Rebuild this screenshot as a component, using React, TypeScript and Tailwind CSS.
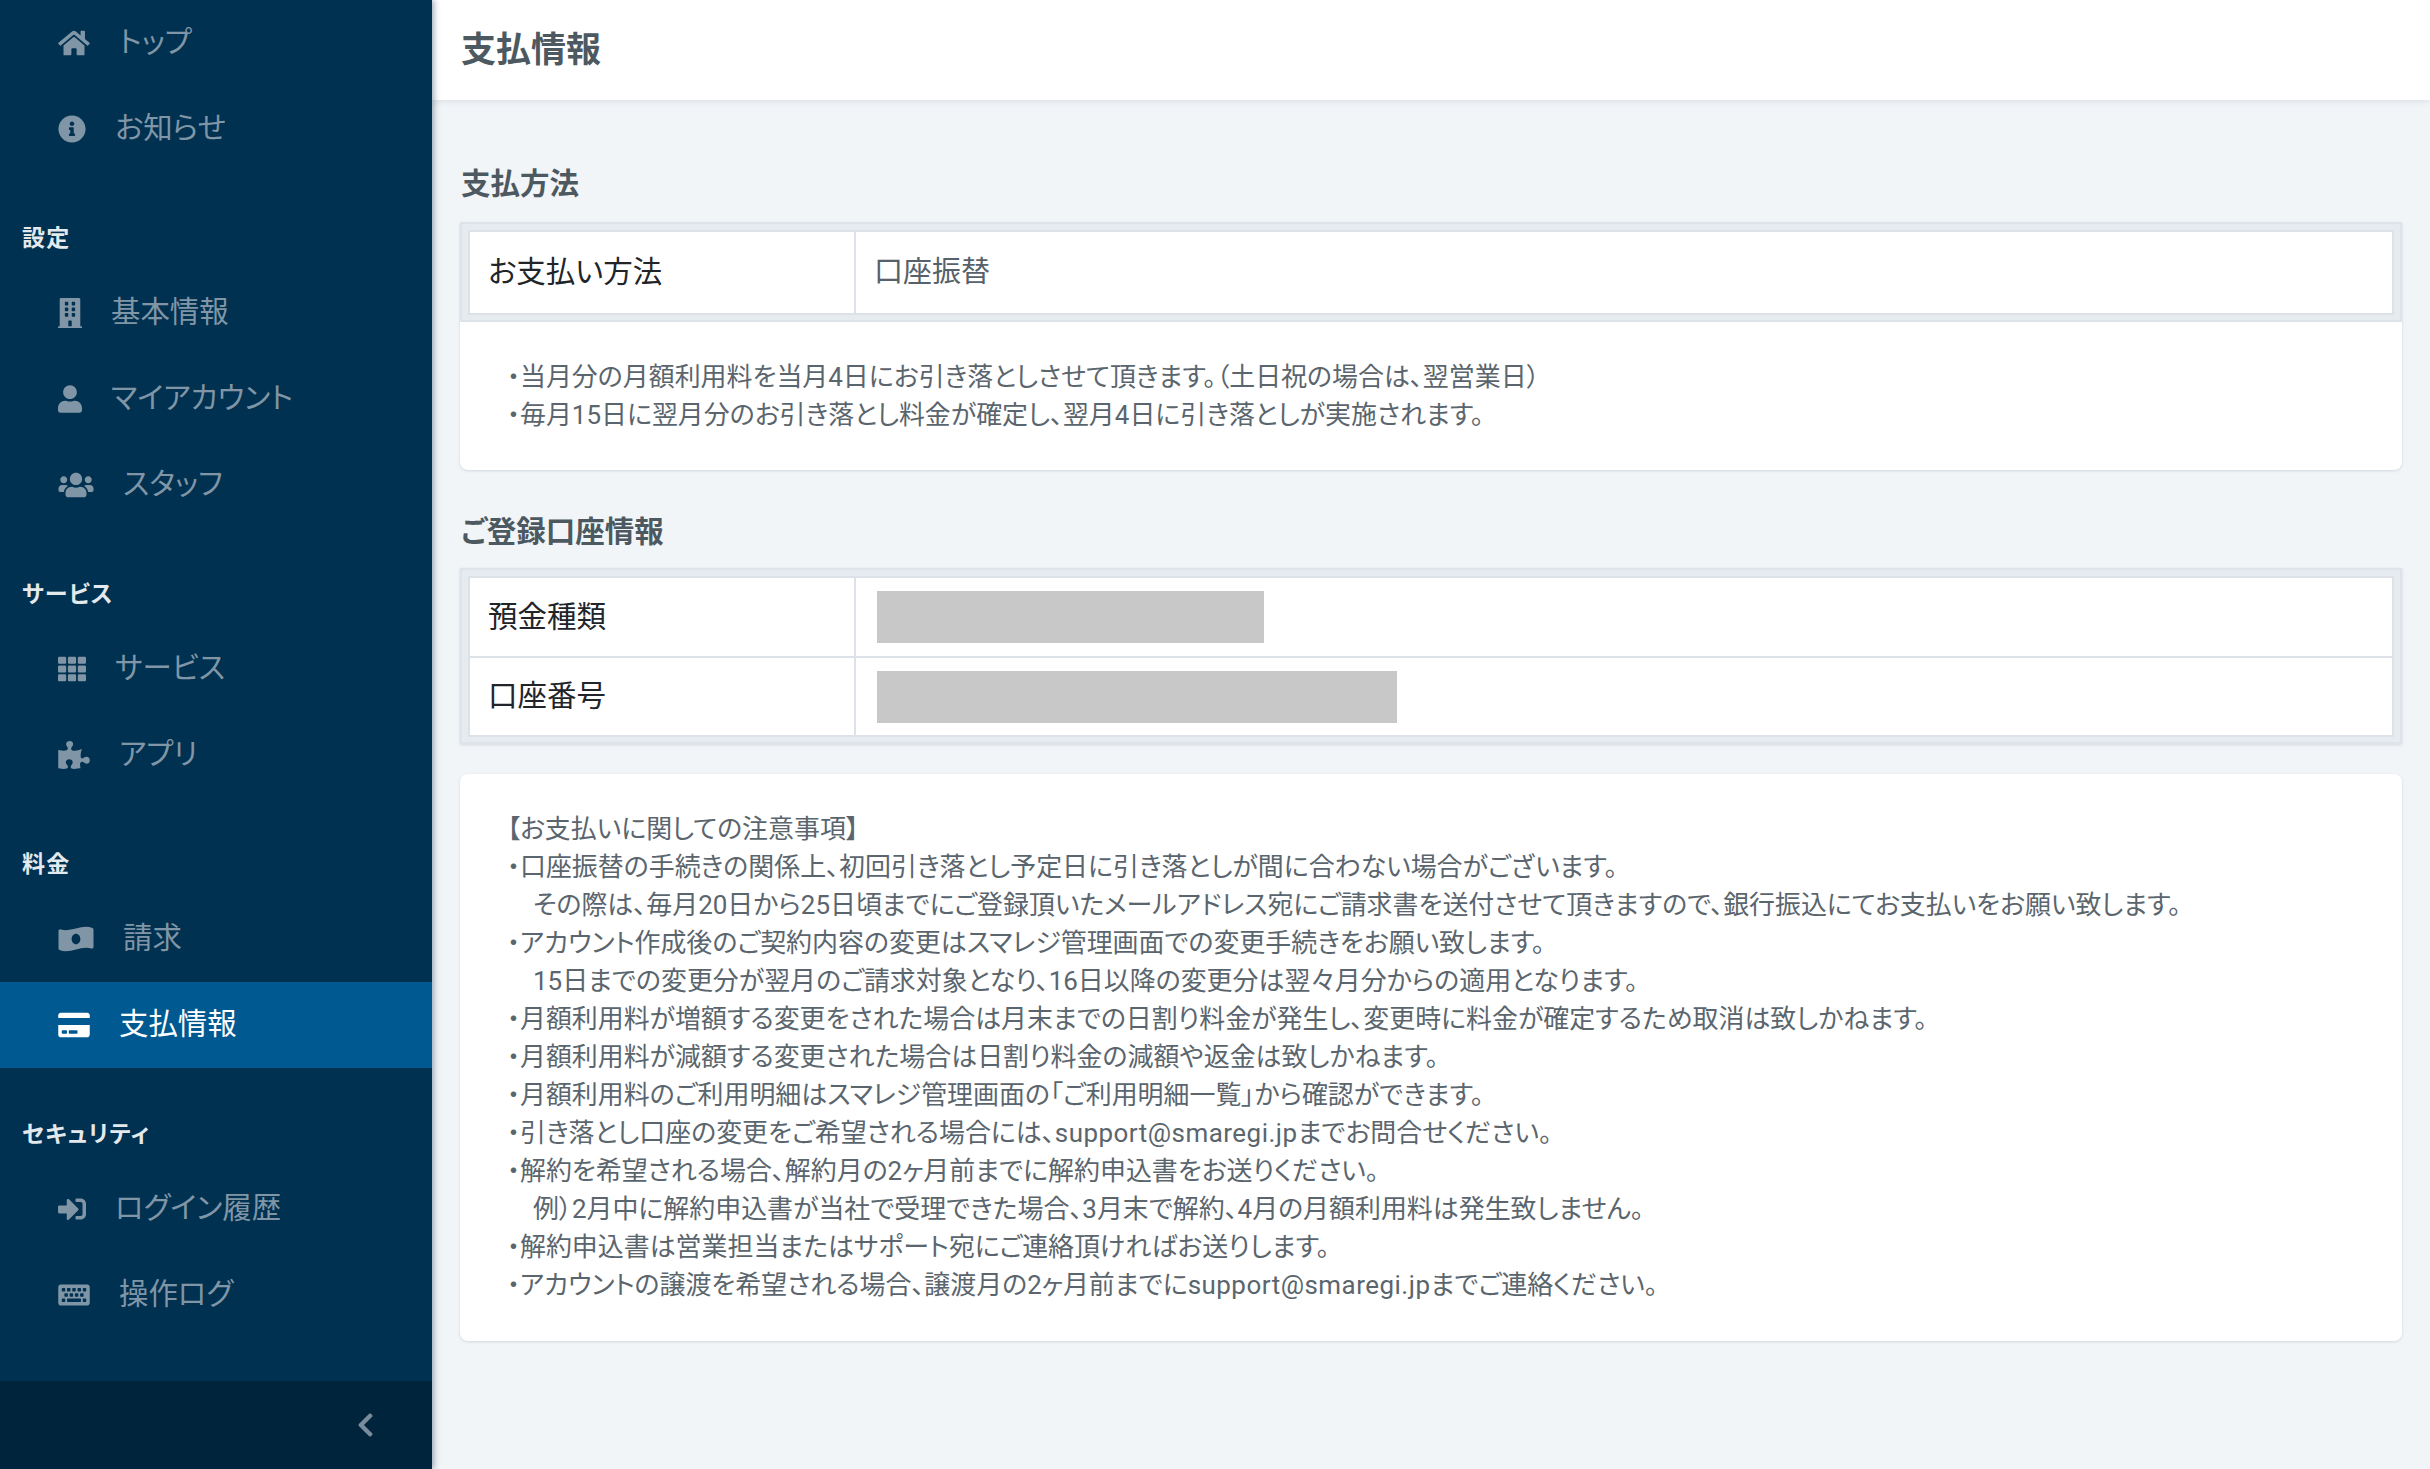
import type { ReactNode } from "react";
import {
  FaBuilding,
  FaChevronLeft,
  FaCreditCard,
  FaHome,
  FaInfoCircle,
  FaKeyboard,
  FaMoneyBillWaveAlt,
  FaPuzzlePiece,
  FaSignInAlt,
  FaTh,
  FaUser,
  FaUsers,
} from "react-icons/fa";

const EMAIL = "support@smaregi.jp";

function NavRow({ icon, label, active }: { icon: ReactNode; label: string; active?: boolean }) {
  return (
    <div
      className={
        active
          ? "flex h-[86px] items-center gap-[29px] bg-[#005a91] pl-[58px] text-[29.4px] text-white"
          : "flex h-[86px] items-center gap-[29px] pl-[58px] text-[29.4px] text-[#8096a7]"
      }
    >
      {icon}
      <span className="pb-[2px]">{label}</span>
    </div>
  );
}

function NavHeading({ label }: { label: string }) {
  return (
    <div className="flex h-[98px] items-end pb-[14px] pl-[22px] text-[23px] font-bold tracking-[1.2px] text-[#e4e9ed]">
      {label}
    </div>
  );
}

function Sidebar() {
  return (
    <aside className="relative z-10 flex h-[1469px] w-[432px] shrink-0 flex-col overflow-hidden bg-[#003150] shadow-[2px_0_6px_rgba(40,70,100,0.45)]">
      <nav className="flex-1">
        <NavRow icon={<FaHome className="h-[28px] w-[32px] shrink-0" />} label="トップ" />
        <NavRow icon={<FaInfoCircle className="h-[28px] w-[28px] shrink-0" />} label="お知らせ" />
        <NavHeading label="設定" />
        <NavRow icon={<FaBuilding preserveAspectRatio="none" className="h-[30px] w-[24px] shrink-0" />} label="基本情報" />
        <NavRow icon={<FaUser className="h-[28px] w-[24px] shrink-0" />} label="マイアカウント" />
        <NavRow icon={<FaUsers className="h-[28px] w-[36px] shrink-0" />} label="スタッフ" />
        <NavHeading label="サービス" />
        <NavRow icon={<FaTh className="h-[28px] w-[28px] shrink-0" />} label="サービス" />
        <NavRow icon={<FaPuzzlePiece className="h-[28px] w-[32px] shrink-0" />} label="アプリ" />
        <NavHeading label="料金" />
        <NavRow icon={<FaMoneyBillWaveAlt className="h-[28px] w-[36px] shrink-0" />} label="請求" />
        <NavRow active icon={<FaCreditCard className="h-[28px] w-[32px] shrink-0" />} label="支払情報" />
        <NavHeading label="セキュリティ" />
        <NavRow icon={<FaSignInAlt className="h-[28px] w-[28px] shrink-0" />} label="ログイン履歴" />
        <NavRow icon={<FaKeyboard className="h-[28px] w-[32px] shrink-0" />} label="操作ログ" />
      </nav>
      <div className="flex h-[88px] shrink-0 items-center justify-end bg-[#00243b] pr-[58px] text-[#7a8c9b]">
        <FaChevronLeft className="h-[28px] w-[17px]" />
      </div>
    </aside>
  );
}

function InfoTable({ rows }: { rows: { label: string; value: ReactNode }[] }) {
  return (
    <div className="border-2 border-[#dde3e8] bg-[#e6ebef] px-[6px] pt-[6px] pb-[5px]">
      <div className="border-2 border-[#dce2e7] bg-white">
        {rows.map((row, i) => (
          <div
            key={row.label}
            className={i > 0 ? "flex border-t-2 border-[#dce2e7]" : "flex"}
          >
            <div className="flex w-[386px] shrink-0 items-center border-r-2 border-[#dce2e7] pl-[18px] text-[29.5px] text-[#212529]">
              {row.label}
            </div>
            <div className="flex flex-1 items-center pl-[18px] text-[29px] text-[#56616a]">
              {row.value}
            </div>
          </div>
        ))}
      </div>
    </div>
  );
}

function Lines({ lines }: { lines: { text: string; indent?: boolean }[] }) {
  return (
    <div className="text-[25.95px] leading-[38px] text-[#5a656d]">
      {lines.map((line) => {
        const [before, after] = line.text.split(EMAIL);
        return (
          <p key={line.text} className={line.indent ? "pl-[26px]" : ""}>
            {before}
            {after !== undefined ? <span className="tracking-[0.5px]">{EMAIL}</span> : null}
            {after}
          </p>
        );
      })}
    </div>
  );
}

const notes = [
  { text: "【お支払いに関しての注意事項】" },
  { text: "・口座振替の手続きの関係上、初回引き落とし予定日に引き落としが間に合わない場合がございます。" },
  { text: "その際は、毎月20日から25日頃までにご登録頂いたメールアドレス宛にご請求書を送付させて頂きますので、銀行振込にてお支払いをお願い致します。", indent: true },
  { text: "・アカウント作成後のご契約内容の変更はスマレジ管理画面での変更手続きをお願い致します。" },
  { text: "15日までの変更分が翌月のご請求対象となり、16日以降の変更分は翌々月分からの適用となります。", indent: true },
  { text: "・月額利用料が増額する変更をされた場合は月末までの日割り料金が発生し、変更時に料金が確定するため取消は致しかねます。" },
  { text: "・月額利用料が減額する変更された場合は日割り料金の減額や返金は致しかねます。" },
  { text: "・月額利用料のご利用明細はスマレジ管理画面の「ご利用明細一覧」から確認ができます。" },
  { text: "・引き落とし口座の変更をご希望される場合には、support@smaregi.jpまでお問合せください。" },
  { text: "・解約を希望される場合、解約月の2ヶ月前までに解約申込書をお送りください。" },
  { text: "例）2月中に解約申込書が当社で受理できた場合、3月末で解約、4月の月額利用料は発生致しません。", indent: true },
  { text: "・解約申込書は営業担当またはサポート宛にご連絡頂ければお送りします。" },
  { text: "・アカウントの譲渡を希望される場合、譲渡月の2ヶ月前までにsupport@smaregi.jpまでご連絡ください。" },
];

export default function App() {
  return (
    <div className="flex h-[1469px] overflow-hidden bg-[#f2f5f8] font-['Roboto','Noto_Sans_CJK_JP',sans-serif] [font-feature-settings:'palt']">
      <Sidebar />
      <main className="min-w-0 flex-1">
        <header className="flex h-[100px] items-center bg-white pt-[2px] pl-[29px] text-[35px] font-bold text-[#4d5961] shadow-[0_2px_6px_rgba(80,100,120,0.12)]">
          支払情報
        </header>
        <div className="px-[28px]">
          <h2 className="mt-[62px] h-[60px] pl-[1px] text-[29.5px] leading-[44px] font-bold text-[#4d5961]">支払方法</h2>
          <section className="overflow-hidden rounded-b-[8px] bg-white shadow-[0_1px_3px_rgba(80,100,120,0.2)]">
            <InfoTable
              rows={[{ label: "お支払い方法", value: <div className="flex h-[81px] items-center">口座振替</div> }]}
            />
            <div className="pt-[36px] pb-[36px] pl-[47px]">
              <Lines
                lines={[
                  { text: "・当月分の月額利用料を当月4日にお引き落としさせて頂きます。（土日祝の場合は、翌営業日）" },
                  { text: "・毎月15日に翌月分のお引き落とし料金が確定し、翌月4日に引き落としが実施されます。" },
                ]}
              />
            </div>
          </section>
          <h2 className="mt-[40px] h-[58px] pl-[1px] text-[29.5px] leading-[44px] font-bold text-[#4d5961]">ご登録口座情報</h2>
          <section className="shadow-[0_1px_3px_rgba(80,100,120,0.2)]">
            <InfoTable
              rows={[
                { label: "預金種類", value: <div className="flex h-[78px] items-center"><div className="ml-[3px] h-[52px] w-[387px] bg-[#c8c8c8]" /></div> },
                { label: "口座番号", value: <div className="flex h-[77px] items-center"><div className="ml-[3px] h-[52px] w-[520px] bg-[#c8c8c8]" /></div> },
              ]}
            />
          </section>
          <section className="mt-[30px] rounded-[8px] bg-white pt-[36px] pb-[37px] pl-[47px] shadow-[0_1px_3px_rgba(80,100,120,0.2)]">
            <Lines lines={notes} />
          </section>
        </div>
      </main>
    </div>
  );
}
